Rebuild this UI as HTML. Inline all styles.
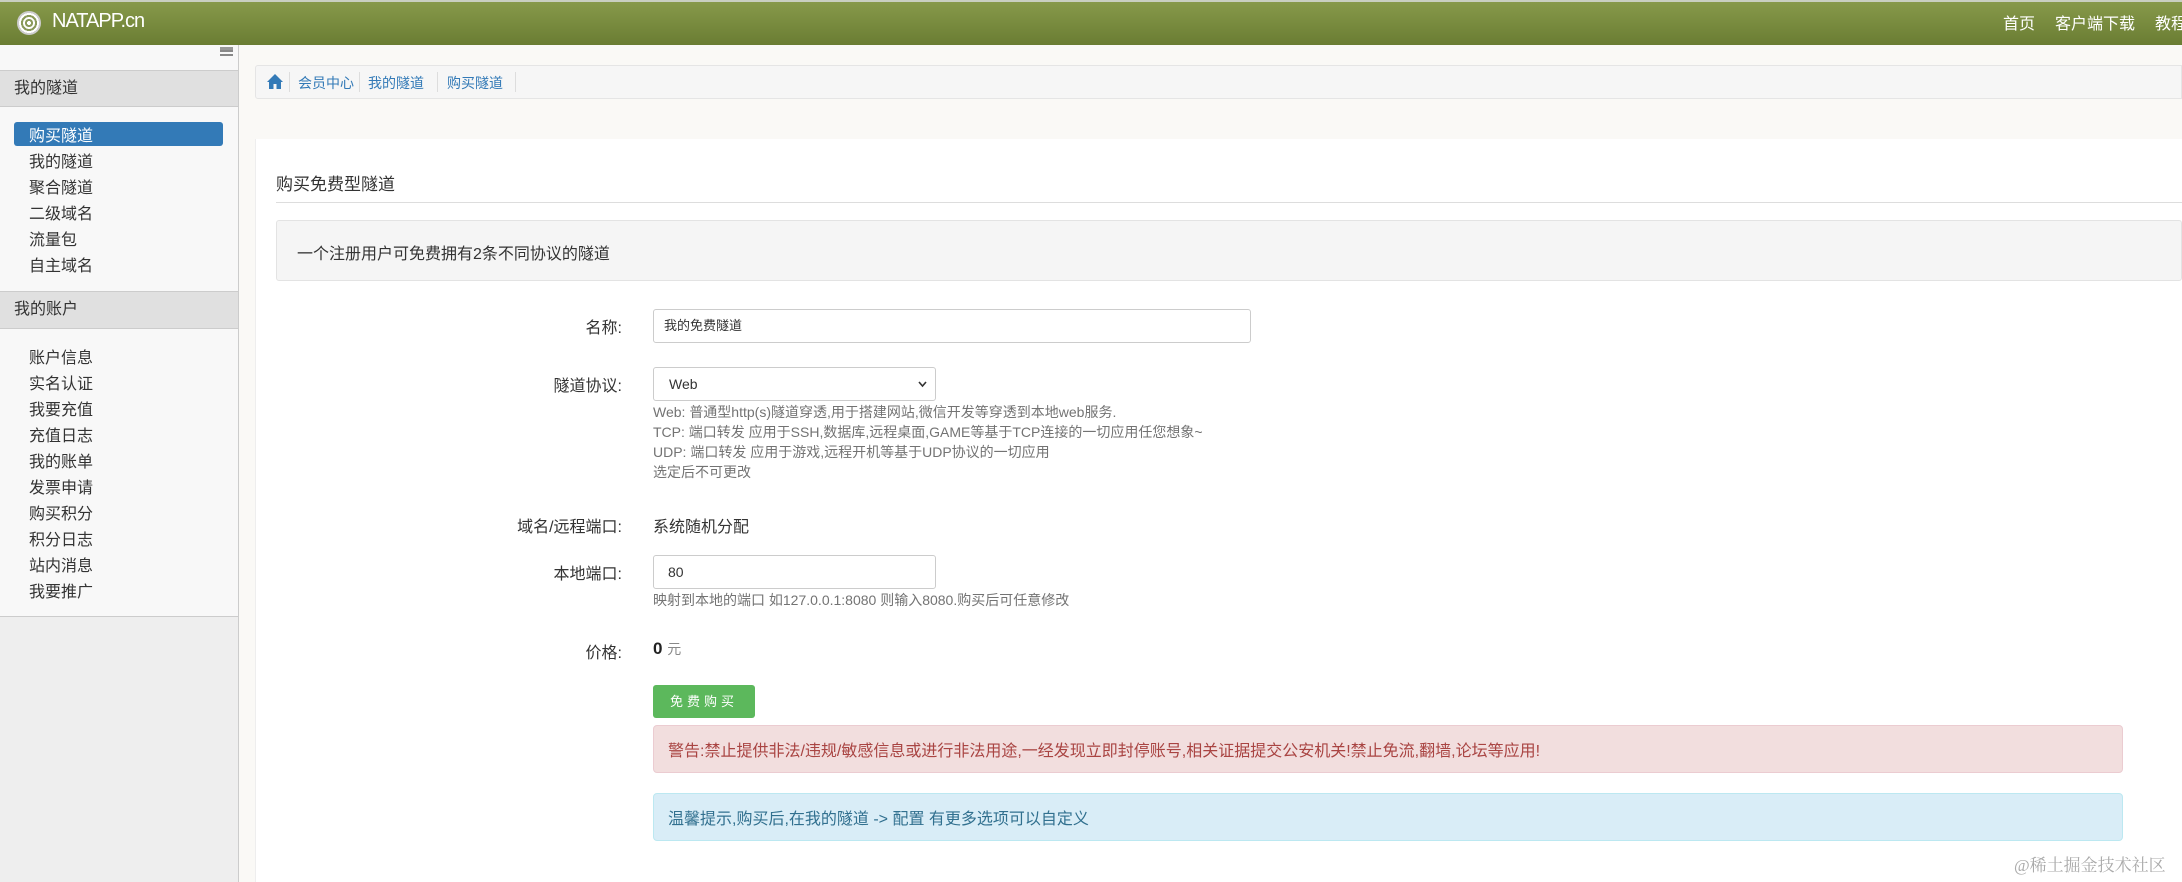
<!DOCTYPE html>
<html><head><meta charset="utf-8"><style>
*{box-sizing:border-box;margin:0;padding:0}
body{width:2182px;height:882px;overflow:hidden;background:#faf9f6;font-family:"Liberation Sans","Noto Sans CJK SC",sans-serif;color:#333;position:relative}
.hdr{position:absolute;left:0;top:0;width:2182px;height:45px;background:linear-gradient(#87994a,#6a7d33);border-top:2px solid #c9cfc0}
.logo{position:absolute;left:17px;top:9px;width:24px;height:24px;border-radius:50%;background:radial-gradient(circle,#fff 0 2px,#8a9a5a 2px 4px,#fff 4px 6px,#8a9a5a 6px 8px,#fff 8px 10px,#ccc 10px 12px)}
.brand{position:absolute;left:52px;top:8px;color:#fff;font-size:20px;letter-spacing:-1px}
.nav{position:absolute;top:8px;color:#fff;font-size:16px;white-space:nowrap}
.side{position:absolute;left:0;top:45px;width:239px;height:837px;background:#eee;border-right:1px solid #ccc}
.sb{position:absolute;left:0;width:238px;background:#f8f8f8}
.sh{position:absolute;left:0;width:238px;background:#e0e0e0;border-top:1px solid #ccc;border-bottom:1px solid #ccc;font-size:16px;padding-left:14px}
.it{position:absolute;left:29px;font-size:16px;color:#333;white-space:nowrap}
.act{position:absolute;left:14px;top:77px;width:209px;height:24px;background:#337ab7;border-radius:3px}
.main{position:absolute;left:255px;top:139px;width:1927px;height:743px;background:#fff;border-left:1px solid #eee}
.bc{position:absolute;left:255px;top:65px;width:1927px;height:34px;background:#f6f6f6;border:1px solid #e5e5e5;border-radius:3px 0 0 3px;font-size:14px;color:#337ab7}
.bc span{position:absolute;top:7px}
.lbl{position:absolute;right:1560px;font-size:16px;color:#333;text-align:right;white-space:nowrap}
.inp{position:absolute;left:653px;border:1px solid #ccc;border-radius:3px;background:#fff;font-size:13px;padding-left:14px}
.help{position:absolute;left:653px;font-size:14px;color:#737373;line-height:20px;white-space:nowrap}
</style></head><body>
<div class="hdr"><div class="logo"></div><div class="brand">NATAPP.cn</div>
<div class="nav" style="left:2003px">首页</div><div class="nav" style="left:2055px">客户端下载</div><div class="nav" style="left:2155px">教程</div></div>
<div class="side">
<div class="sb" style="top:0;height:25px"></div>
<div style="position:absolute;left:220px;top:2px;width:13px;height:11px;border-top:3px solid #999;background:linear-gradient(#888 0 2px,transparent 2px 4px,#888 4px 6px,transparent 6px 8px,#888 8px)"></div>
<div class="sh" style="top:25px;height:37px;line-height:35px">我的隧道</div>
<div class="sb" style="top:62px;height:184px"></div>
<div class="act"></div>
<div class="it" style="top:77px;color:#fff">购买隧道</div>
<div class="it" style="top:103px">我的隧道</div>
<div class="it" style="top:129px">聚合隧道</div>
<div class="it" style="top:155px">二级域名</div>
<div class="it" style="top:181px">流量包</div>
<div class="it" style="top:207px">自主域名</div>
<div class="sh" style="top:246px;height:38px;line-height:36px">我的账户</div>
<div class="sb" style="top:284px;height:288px;border-bottom:1px solid #ccc"></div>
<div class="it" style="top:299px">账户信息</div>
<div class="it" style="top:325px">实名认证</div>
<div class="it" style="top:351px">我要充值</div>
<div class="it" style="top:377px">充值日志</div>
<div class="it" style="top:403px">我的账单</div>
<div class="it" style="top:429px">发票申请</div>
<div class="it" style="top:455px">购买积分</div>
<div class="it" style="top:481px">积分日志</div>
<div class="it" style="top:507px">站内消息</div>
<div class="it" style="top:533px">我要推广</div>
</div>
<div class="bc">
<svg style="position:absolute;left:11px;top:8px" width="16" height="15" viewBox="0 0 16 15"><path d="M8 0L0 8h2v7h4.5v-5h3v5H14V8h2z" fill="#337ab7"/></svg>
<span style="left:42px">会员中心</span><span style="left:112px">我的隧道</span><span style="left:191px">购买隧道</span>
<div style="position:absolute;left:33px;top:6px;height:20px;border-left:1px solid #ddd"></div>
<div style="position:absolute;left:103px;top:6px;height:20px;border-left:1px solid #ddd"></div>
<div style="position:absolute;left:181px;top:6px;height:20px;border-left:1px solid #ddd"></div>
<div style="position:absolute;left:259px;top:6px;height:20px;border-left:1px solid #ddd"></div>
</div>
<div class="main"></div>
<div style="position:absolute;left:276px;top:170px;font-size:17px;color:#333">购买免费型隧道</div>
<div style="position:absolute;left:276px;top:202px;width:1906px;border-top:1px solid #ddd"></div>
<div style="position:absolute;left:276px;top:220px;width:1906px;height:61px;background:#f5f5f5;border:1px solid #e3e3e3;border-radius:3px;font-size:16px;padding:19px 0 0 20px">一个注册用户可免费拥有2条不同协议的隧道</div>
<div class="lbl" style="top:314px">名称:</div>
<div class="inp" style="top:309px;width:598px;height:34px;line-height:32px;padding-left:10px">我的免费隧道</div>
<div class="lbl" style="top:372px">隧道协议:</div>
<div class="inp" style="top:367px;width:283px;height:34px;line-height:32px;font-size:14px;padding-left:15px">Web<svg style="position:absolute;right:8px;top:13px" width="9" height="7" viewBox="0 0 9 7"><path d="M1 1l3.5 4L8 1" stroke="#333" stroke-width="1.6" fill="none"/></svg></div>
<div class="help" style="top:402px">Web: 普通型http(s)隧道穿透,用于搭建网站,微信开发等穿透到本地web服务.<br>TCP: 端口转发 应用于SSH,数据库,远程桌面,GAME等基于TCP连接的一切应用任您想象~<br>UDP: 端口转发 应用于游戏,远程开机等基于UDP协议的一切应用<br>选定后不可更改</div>
<div class="lbl" style="top:513px">域名/远程端口:</div>
<div style="position:absolute;left:653px;top:513px;font-size:16px">系统随机分配</div>
<div class="lbl" style="top:560px">本地端口:</div>
<div class="inp" style="top:555px;width:283px;height:34px;line-height:32px;font-size:14px">80</div>
<div class="help" style="top:590px">映射到本地的端口 如127.0.0.1:8080 则输入8080.购买后可任意修改</div>
<div class="lbl" style="top:639px">价格:</div>
<div style="position:absolute;left:653px;top:639px;font-size:17px;font-weight:bold;color:#222">0 <span style="font-weight:normal;font-size:14px;color:#888">元</span></div>
<div style="position:absolute;left:653px;top:685px;width:102px;height:33px;background:#5cb85c;border-radius:3px;color:#fff;font-size:13px;line-height:33px;text-align:center;letter-spacing:4px">免费购买</div>
<div style="position:absolute;left:653px;top:725px;width:1470px;height:48px;background:#f2dede;border:1px solid #ebccd1;border-radius:4px;color:#a94442;font-size:16px;padding:11px 0 0 14px;white-space:nowrap">警告:禁止提供非法/违规/敏感信息或进行非法用途,一经发现立即封停账号,相关证据提交公安机关!禁止免流,翻墙,论坛等应用!</div>
<div style="position:absolute;left:653px;top:793px;width:1470px;height:48px;background:#d9edf7;border:1px solid #bce8f1;border-radius:4px;color:#31708f;font-size:16px;padding:11px 0 0 14px">温馨提示,购买后,在我的隧道 -&gt; 配置 有更多选项可以自定义</div>
<div style="position:absolute;left:2014px;top:851px;font-size:17px;color:#aaa;font-family:'Liberation Serif','Noto Serif CJK SC',serif">@稀土掘金技术社区</div>
</body></html>
